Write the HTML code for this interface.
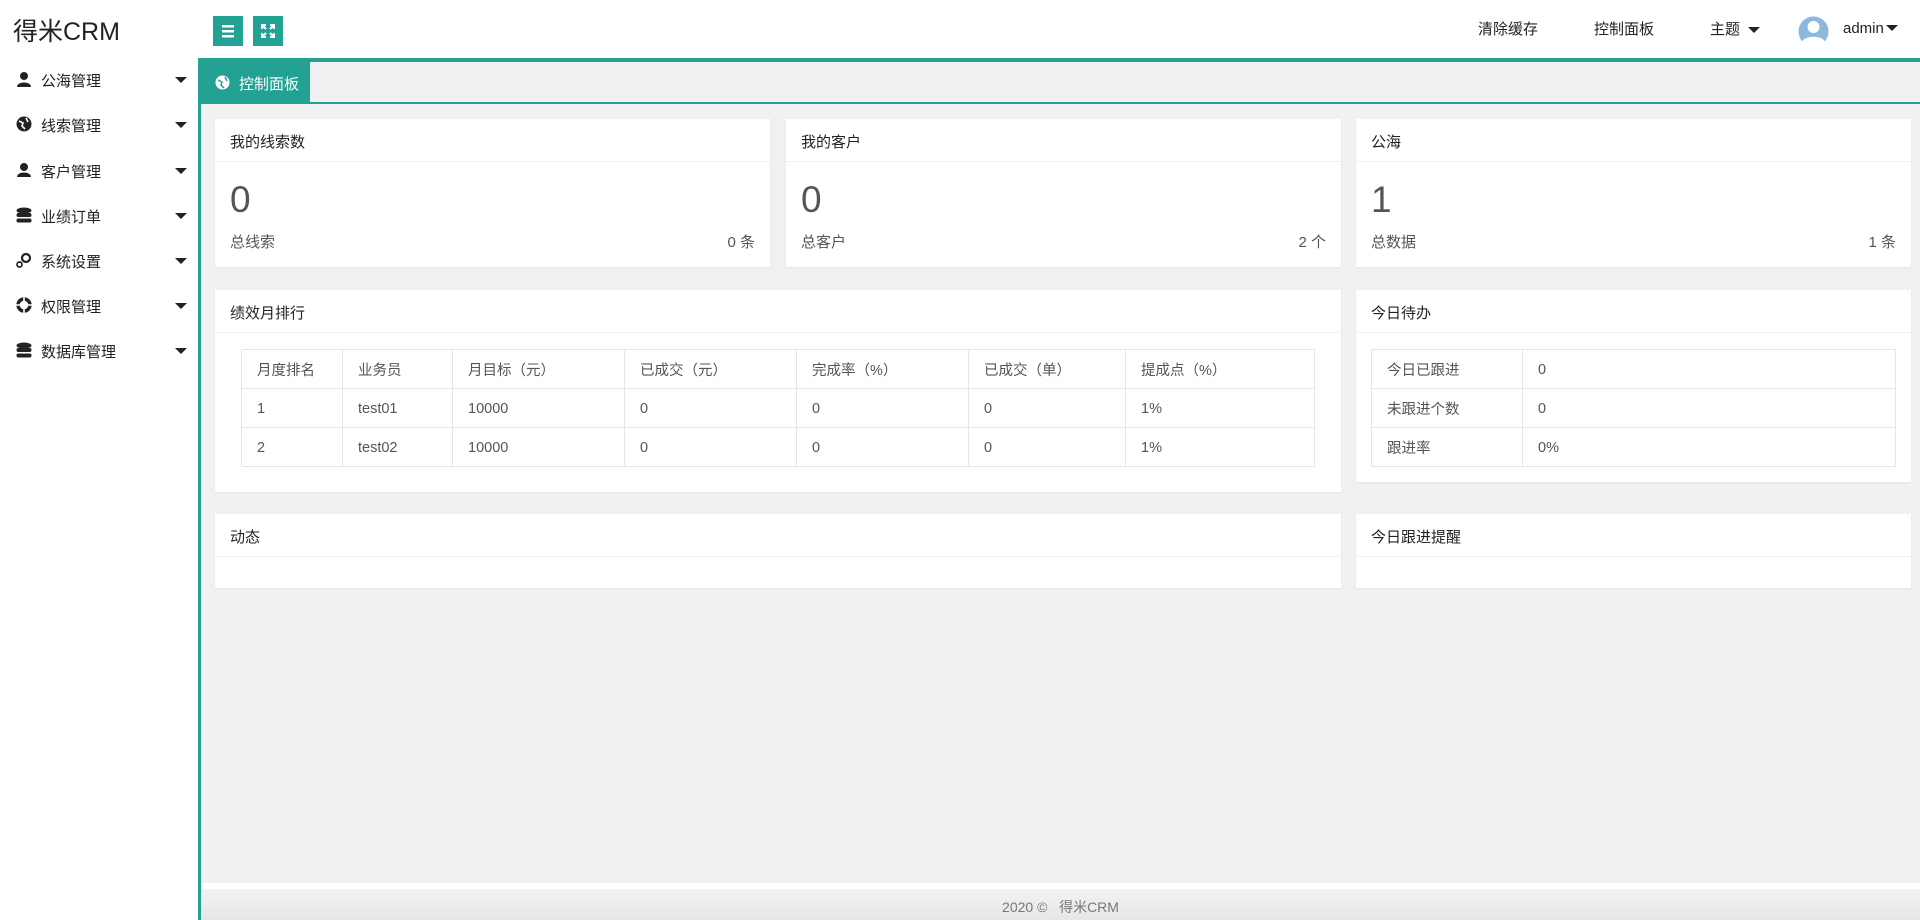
<!DOCTYPE html>
<html><head><meta charset="utf-8"><style>
*{box-sizing:border-box;margin:0;padding:0}
body{width:1920px;height:920px;overflow:hidden;background:#f1f1f1;font-family:"Liberation Sans","Noto Sans CJK SC",sans-serif;color:#333;position:relative}
.hdr{position:absolute;left:0;top:0;width:1920px;height:58px;background:#fff}
.logo{position:absolute;left:13px;top:12px;font-size:25px;color:#222}
.btn{position:absolute;top:16px;width:30px;height:30px;background:#23a294}
.top a{position:absolute;top:18px;font-size:15px;color:#222}
.tline{position:absolute;left:199px;top:58px;width:1721px;height:4px;background:#23a294}
.side{position:absolute;left:0;top:58px;width:198px;height:862px;background:#fff}
.vline{position:absolute;left:198px;top:58px;width:3px;height:862px;background:#23a294}
.mi{position:absolute;left:0;width:198px;height:40px;font-size:15px;color:#222}
.mi .ic{position:absolute;left:16px;top:11px;width:16px;height:16px}
.mi span{position:absolute;left:41px;top:10px}
.mi .car{position:absolute;left:175px;top:17px;border-left:6px solid transparent;border-right:6px solid transparent;border-top:6px solid #222}
.tab{position:absolute;left:201px;top:62px;width:109px;height:41px;background:#23a294;color:#fff;font-size:15px}
.tabline{position:absolute;left:201px;top:102px;width:1719px;height:2px;background:#23a294}
.card{position:absolute;background:#fff;box-shadow:0 1px 2px rgba(0,0,0,.06)}
.card .h{height:43px;border-bottom:1px solid #f0f0f0;padding:12px 15px;font-size:15px;color:#222}
.big{position:absolute;left:15px;top:60px;font-size:37px;color:#555}
.sub{position:absolute;left:15px;top:112px;font-size:15px;color:#555}
.subr{position:absolute;right:15px;top:112px;font-size:15px;color:#555}
table{position:absolute;border-collapse:collapse;font-size:14.5px;color:#555}
td{border:1px solid #e6e6e6;height:39px;padding:1px 15px 0}
.foot{position:absolute;left:201px;top:889px;width:1719px;height:31px;background:linear-gradient(#f3f3f3,#e6e6e6);text-align:center;font-size:14px;color:#777;padding-top:8px}
.fw{position:absolute;left:201px;top:883px;width:1719px;height:6px;background:#fff}
</style></head><body>
<div class="hdr">
<div class="logo">得米CRM</div>
<div class="btn" style="left:213px"><svg width="30" height="30"><rect x="9" y="9" width="12" height="2.5" fill="#fff"/><rect x="9" y="14" width="12" height="2.5" fill="#fff"/><rect x="9" y="19" width="12" height="2.5" fill="#fff"/></svg></div>
<div class="btn" style="left:253px"><svg width="30" height="30" fill="none" stroke="#fff" stroke-width="2"><path d="M9 13V9h4M17 9h4v4M21 17v4h-4M13 21H9v-4M9 9l4 4M21 9l-4 4M21 21l-4-4M9 21l4-4"/></svg></div>
<div class="top"><a style="left:1478px">清除缓存</a><a style="left:1594px">控制面板</a><a style="left:1710px">主题</a></div>
<div style="position:absolute;left:1748px;top:27px;border-left:6px solid transparent;border-right:6px solid transparent;border-top:6px solid #222"></div>
<svg style="position:absolute;left:1798px;top:16px" width="31" height="31"><circle cx="15.5" cy="15.5" r="15" fill="#8db8dd"/><circle cx="15.5" cy="11" r="6" fill="#fff"/><path d="M4 26c2-7 21-7 23 0a15 15 0 0 1-23 0z" fill="#fff"/></svg>
<div style="position:absolute;left:1843px;top:20px;font-size:15px;color:#222">admin</div>
<div style="position:absolute;left:1886px;top:25px;border-left:6px solid transparent;border-right:6px solid transparent;border-top:6px solid #222"></div>
</div>
<div class="tline"></div>
<div class="side">
<div class="mi" style="top:2px"><svg class="ic"><circle cx="8" cy="5" r="4" fill="#222"/><path d="M1 16c0-6 14-6 14 0z" fill="#222"/></svg><span>公海管理</span><i class="car"></i></div>
<div class="mi" style="top:47px"><svg class="ic"><circle cx="8" cy="8" r="7.5" fill="#222"/><path d="M3 5l4 2-1 3 3 3M10 2l2 4" stroke="#fff" stroke-width="1.6" fill="none"/></svg><span>线索管理</span><i class="car"></i></div>
<div class="mi" style="top:93px"><svg class="ic"><circle cx="8" cy="5" r="4" fill="#222"/><path d="M1 15c0-6 14-6 14 0z" fill="#222"/></svg><span>客户管理</span><i class="car"></i></div>
<div class="mi" style="top:138px"><svg class="ic"><ellipse cx="8" cy="3.5" rx="7.5" ry="3" fill="#222"/><rect x=".5" y="6" width="15" height="4" rx="2" fill="#222"/><rect x=".5" y="11.5" width="15" height="4" rx="2" fill="#222"/></svg><span>业绩订单</span><i class="car"></i></div>
<div class="mi" style="top:183px"><svg class="ic"><circle cx="10" cy="6" r="4" fill="none" stroke="#222" stroke-width="2.2"/><circle cx="3.5" cy="12.5" r="2.5" fill="none" stroke="#222" stroke-width="1.7"/></svg><span>系统设置</span><i class="car"></i></div>
<div class="mi" style="top:228px"><svg class="ic"><circle cx="8" cy="8" r="6" fill="none" stroke="#222" stroke-width="3.4"/><path d="M8 0v16M0 8h16" stroke="#fff" stroke-width="1.6"/></svg><span>权限管理</span><i class="car"></i></div>
<div class="mi" style="top:273px"><svg class="ic"><ellipse cx="8" cy="3.5" rx="7.5" ry="3" fill="#222"/><rect x=".5" y="6" width="15" height="4" rx="2" fill="#222"/><rect x=".5" y="11.5" width="15" height="4" rx="2" fill="#222"/></svg><span>数据库管理</span><i class="car"></i></div>
</div>
<div class="vline"></div>
<div class="tab"><svg style="position:absolute;left:14px;top:13px" width="15" height="15"><circle cx="7.5" cy="7.5" r="7" fill="#fff"/><path d="M3 5l4 2-1 3 3 3M10 2l2 4" stroke="#23a294" stroke-width="1.5" fill="none"/></svg><span style="position:absolute;left:38px;top:11px">控制面板</span></div>
<div class="tabline"></div>

<div class="card" style="left:215px;top:119px;width:555px;height:148px"><div class="h">我的线索数</div><div class="big">0</div><div class="sub">总线索</div><div class="subr">0 条</div></div>
<div class="card" style="left:786px;top:119px;width:555px;height:148px"><div class="h">我的客户</div><div class="big">0</div><div class="sub">总客户</div><div class="subr">2 个</div></div>
<div class="card" style="left:1356px;top:119px;width:555px;height:148px"><div class="h">公海</div><div class="big">1</div><div class="sub">总数据</div><div class="subr">1 条</div></div>

<div class="card" style="left:215px;top:290px;width:1126px;height:202px"><div class="h">绩效月排行</div>
<table style="left:26px;top:59px;width:1074px">
<tr><td style="width:101px">月度排名</td><td style="width:110px">业务员</td><td style="width:172px">月目标（元）</td><td style="width:172px">已成交（元）</td><td style="width:172px">完成率（%）</td><td style="width:157px">已成交（单）</td><td>提成点（%）</td></tr>
<tr><td>1</td><td>test01</td><td>10000</td><td>0</td><td>0</td><td>0</td><td>1%</td></tr>
<tr><td>2</td><td>test02</td><td>10000</td><td>0</td><td>0</td><td>0</td><td>1%</td></tr>
</table></div>
<div class="card" style="left:1356px;top:290px;width:555px;height:192px"><div class="h">今日待办</div>
<table style="left:15px;top:59px;width:525px">
<tr><td style="width:151px">今日已跟进</td><td>0</td></tr>
<tr><td>未跟进个数</td><td>0</td></tr>
<tr><td>跟进率</td><td>0%</td></tr>
</table></div>

<div class="card" style="left:215px;top:514px;width:1126px;height:74px"><div class="h">动态</div></div>
<div class="card" style="left:1356px;top:514px;width:555px;height:74px"><div class="h">今日跟进提醒</div></div>

<div class="fw"></div>
<div class="foot">2020 ©&nbsp;&nbsp;&nbsp;得米CRM</div>
</body></html>
